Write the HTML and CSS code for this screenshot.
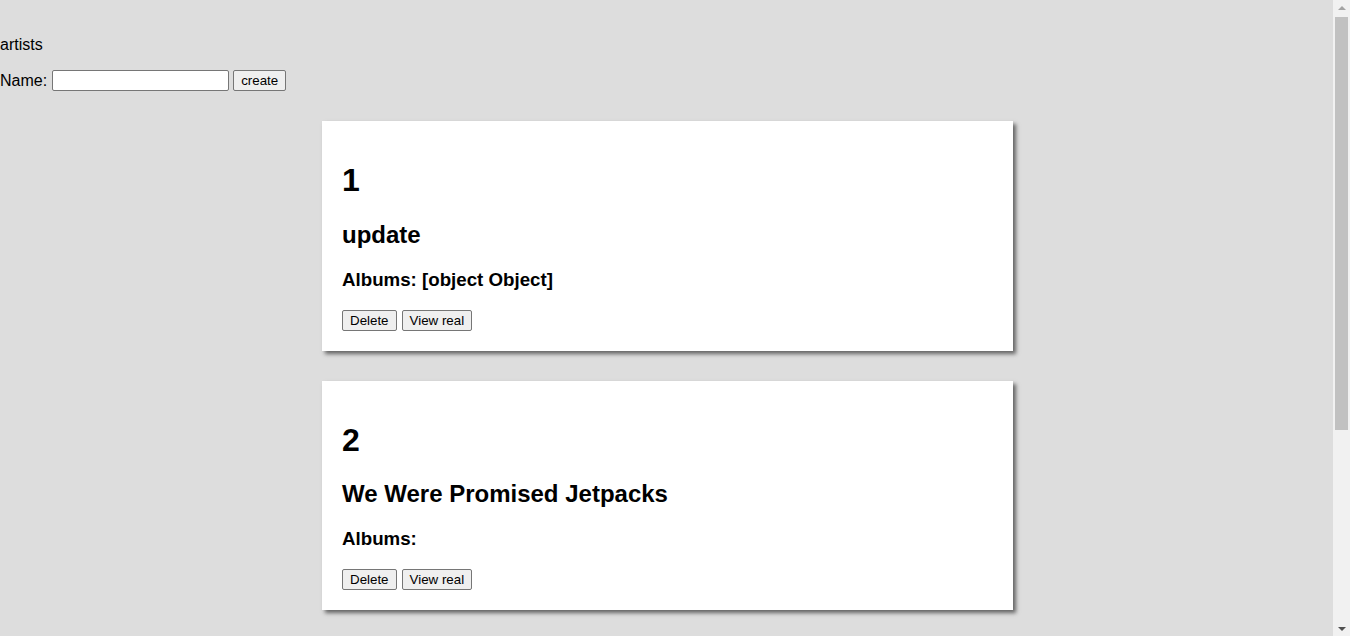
FILE: index.html
```html
<!DOCTYPE html>
<html>
<head>
<meta charset="utf-8">
<title>artists</title>
<link rel="stylesheet" href="styles.css">
</head>
<body>
<div class="page">
  <p class="title">artists</p>
  <form class="create-form">
    <label class="create-label" for="name">Name:</label>
    <input class="create-input" id="name" type="text">
    <button class="btn" type="button">create</button>
  </form>
  <div class="list">
    <div class="card">
      <h1 class="card-id">1</h1>
      <h2 class="card-name">update</h2>
      <h3 class="card-albums">Albums: [object Object]</h3>
      <div class="card-actions">
        <button class="btn" type="button">Delete</button>
        <button class="btn" type="button">View real</button>
      </div>
    </div>
    <div class="card">
      <h1 class="card-id">2</h1>
      <h2 class="card-name">We Were Promised Jetpacks</h2>
      <h3 class="card-albums">Albums: </h3>
      <div class="card-actions">
        <button class="btn" type="button">Delete</button>
        <button class="btn" type="button">View real</button>
      </div>
    </div>
  </div>
</div>
<div class="scrollbar" aria-hidden="true">
  <div class="scroll-btn"><span class="arrow-up"></span></div>
  <div class="scroll-track">
    <div class="scroll-thumb"></div>
  </div>
  <div class="scroll-btn"><span class="arrow-down"></span></div>
</div>
</body>
</html>
```

FILE: styles.css
```css
html, body {
  margin: 0;
  padding: 0;
  background: #dddddd;
  overflow: hidden;
}

body {
  font-family: "Liberation Sans", Arial, sans-serif;
  font-size: 16px;
  color: #000;
}

.page {
  padding-top: 36px;
  padding-right: 17px;
}

.title {
  margin: 0;
  line-height: normal;
}

.create-form {
  display: flex;
  align-items: center;
  gap: 5px;
  margin-top: 16px;
}

.create-input {
  font-family: "Liberation Sans", Arial, sans-serif;
  font-size: 13.333px;
  width: 177px;
  height: 21px;
  box-sizing: border-box;
  padding: 1px 2px;
  border: 1px solid #767676;
  border-radius: 2px;
  background: #fff;
  margin: 0;
}

.create-form .btn {
  margin-left: -1px;
}

.btn {
  font-family: "Liberation Sans", Arial, sans-serif;
  font-size: 13.333px;
  height: 21px;
  box-sizing: border-box;
  padding: 0 7px;
  border: 1px solid #767676;
  border-radius: 2px;
  background: #efefef;
  color: #000;
  margin: 0;
}

.list {
  margin-top: 30px;
  padding-left: 2px;
}

.card {
  width: 651px;
  padding: 20px;
  margin: 0 auto 30px;
  background: #fff;
  box-shadow: 3px 3px 4px rgba(0, 0, 0, 0.55);
}

.card-id {
  font-size: 32px;
  margin: 21px 0;
}

.card-name {
  font-size: 24px;
  margin: 21.5px 0 20px;
}

.card-albums {
  font-size: 18.72px;
  margin: 20px 0 19.2px;
}

.card-actions {
  display: flex;
  gap: 5px;
}

.scrollbar {
  position: fixed;
  top: 0;
  right: 0;
  width: 17px;
  height: 100vh;
  background: #f1f1f1;
  display: flex;
  flex-direction: column;
}

.scroll-btn {
  height: 17px;
  flex: none;
  display: flex;
  align-items: center;
  justify-content: center;
}

.arrow-up {
  width: 0;
  height: 0;
  border-left: 4px solid transparent;
  border-right: 4px solid transparent;
  border-bottom: 4px solid #a3a3a3;
  margin-top: -1px;
}

.arrow-down {
  width: 0;
  height: 0;
  border-left: 4px solid transparent;
  border-right: 4px solid transparent;
  border-top: 4px solid #505050;
  margin-top: 2px;
}

.scroll-track {
  flex: 1;
  padding: 0 2px;
}

.scroll-thumb {
  height: 413px;
  background: #c1c1c1;
}
```
